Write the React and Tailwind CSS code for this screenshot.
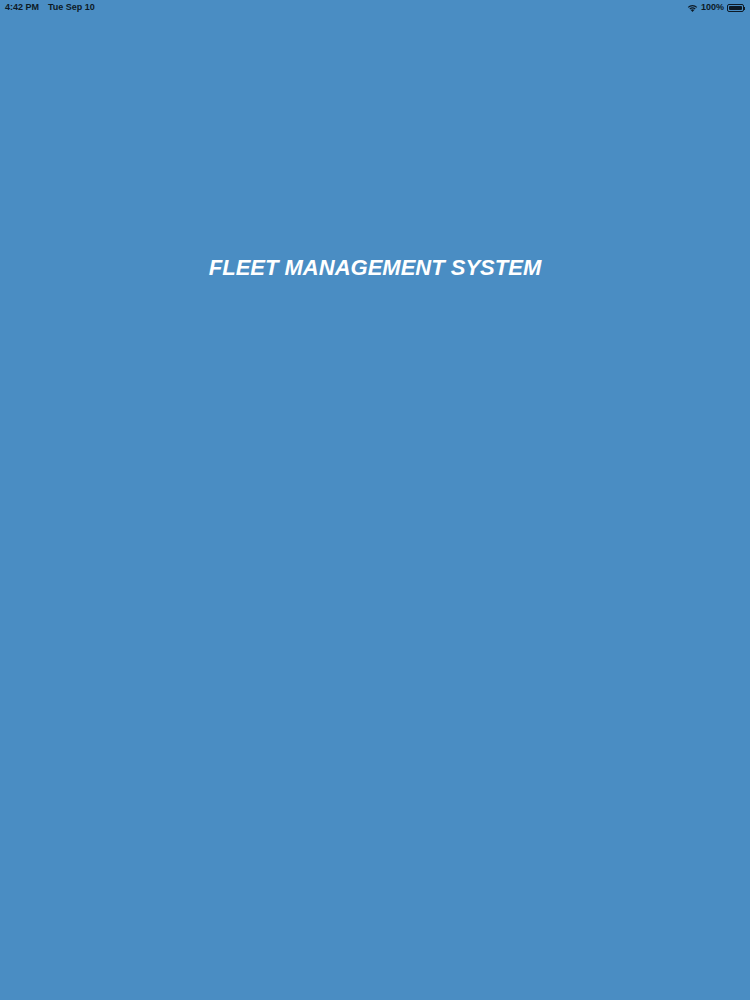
export default function App() {
  return (
    <div className="w-[750px] h-[1000px] bg-[#4a8dc3] relative overflow-hidden" style={{ fontFamily: '"Liberation Sans", Arial, sans-serif' }}>
      <div className="h-[15px] flex items-center justify-between px-[5px] pt-[1px] text-[9px] text-[#0d1a26] font-semibold">
        <div className="flex gap-[9px]">
          <span>4:42 PM</span>
          <span>Tue Sep 10</span>
        </div>
        <div className="flex items-center gap-[3px]">
          <svg width="11" height="8" viewBox="0 0 11 8">
            <path d="M5.5 8 L3.7 6 A2.6 2.6 0 0 1 7.3 6 Z" fill="#0d1a26" />
            <path d="M2.4 4.6 A4.6 4.6 0 0 1 8.6 4.6 L7.8 5.5 A3.4 3.4 0 0 0 3.2 5.5 Z" fill="#0d1a26" />
            <path d="M0.8 2.9 A6.9 6.9 0 0 1 10.2 2.9 L9.4 3.8 A5.7 5.7 0 0 0 1.6 3.8 Z" fill="#0d1a26" />
          </svg>
          <span>100%</span>
          <div className="flex items-center">
            <div className="w-[17px] h-[8px] rounded-[2px] border border-[#0d1a26] p-[1px]">
              <div className="w-full h-full bg-[#0d1a26] rounded-[1px]" />
            </div>
            <div className="w-[1px] h-[3px] bg-[#0d1a26]" />
          </div>
        </div>
      </div>
      <div className="flex justify-center mt-[241px]">
        <h1 className="text-white text-[22px] font-bold italic leading-[24px]">FLEET MANAGEMENT SYSTEM</h1>
      </div>
    </div>
  );
}
